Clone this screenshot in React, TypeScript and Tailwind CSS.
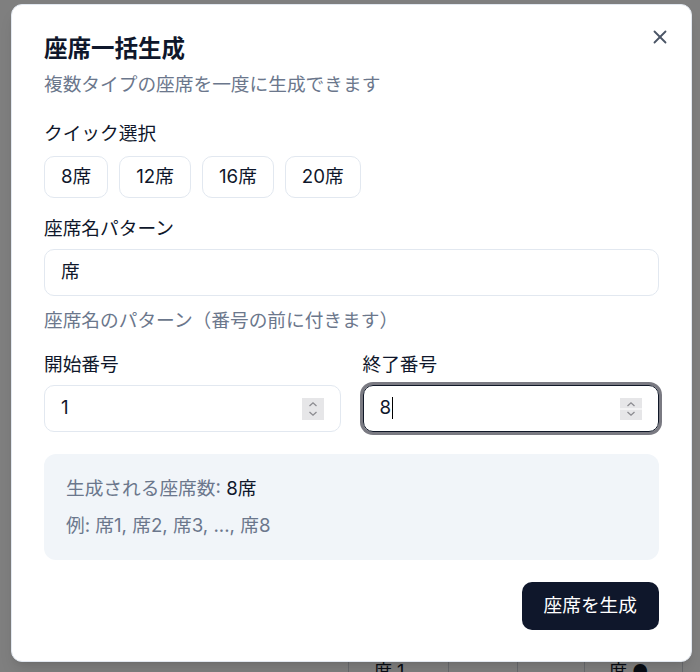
import { X } from "lucide-react";

const font = "font-['Inter','Noto_Sans_CJK_JP',sans-serif]";

function Spinner({ split = false }: { split?: boolean }) {
  return (
    <svg width="22" height="22" viewBox="0 0 22 22" className="shrink-0">
      <rect x="0" y="0" width="22" height="22" fill="#e6e6e8" />
      {split && <rect x="0" y="10.5" width="22" height="1" fill="#ffffff" />}
      <path d="M7.5 8 L11 4.8 L14.5 8" fill="none" stroke="#8b8b90" strokeWidth="1.3" />
      <path d="M7.5 14 L11 17.2 L14.5 14" fill="none" stroke="#8b8b90" strokeWidth="1.3" />
    </svg>
  );
}

const quick = ["8席", "12席", "16席", "20席"];

export default function App() {
  return (
    <div className={`relative flex h-[672px] w-full flex-col overflow-hidden bg-white ${font}`}>
      {/* page content peeking out under the dialog */}
      <div className="flex-1" />
      <div className="flex h-[40px] pl-[348px] text-[18px] text-gray-900">
        <div className="w-[101px] border-x border-gray-300 pl-[25px] pt-[26px]">席 1</div>
        <div className="w-[69px] border-r border-gray-300" />
        <div className="w-[67px] border-r border-gray-300" />
        <div className="w-[98px] border-r border-gray-300 pl-[24px] pt-[26px]">席 ●</div>
      </div>

      {/* overlay */}
      <div className="absolute inset-0 bg-black/50" />

      {/* dialog */}
      <div className="absolute left-[11px] top-[4px] w-[681px] rounded-[11px] border border-slate-200 bg-white px-[32px] pb-[31px] pt-[32px] shadow-lg">
        <button className="absolute right-[20px] top-[21px] text-gray-600">
          <X size={22} strokeWidth={2} />
        </button>

        <h2 className="text-[23.5px] font-semibold leading-[24px] text-slate-900">座席一括生成</h2>
        <p className="mt-[10px] text-[18.7px] leading-[27px] text-[#6b778c]">
          複数タイプの座席を一度に生成できます
        </p>

        <div className="mt-[22px] text-[18.7px] leading-[27px] text-slate-900">クイック選択</div>
        <div className="mt-[9px] flex gap-[11px]">
          {quick.map((q) => (
            <button
              key={q}
              className="h-[42px] rounded-[10px] border border-slate-200 bg-white px-4 text-[18.7px] text-slate-900"
            >
              {q}
            </button>
          ))}
        </div>

        <div className="mt-[17px] text-[18.7px] leading-[27px] text-slate-900">座席名パターン</div>
        <div className="mt-[7px] flex h-[47px] items-center rounded-[10px] border border-slate-200 px-[16px] text-[18.7px] text-slate-900">
          席
        </div>
        <p className="mt-[11px] text-[18.7px] leading-[27px] text-[#6b778c]">
          座席名のパターン（番号の前に付きます）
        </p>

        <div className="mt-[17px] grid grid-cols-2 gap-x-[22px]">
          <div className="text-[18.7px] leading-[27px] text-slate-900">開始番号</div>
          <div className="text-[18.7px] leading-[27px] text-slate-900">終了番号</div>
          <div className="mt-[7px] flex h-[47px] items-center justify-between rounded-[10px] border border-slate-200 pl-[16px] pr-[16px] text-[18.7px] text-slate-900">
            <span>1</span>
            <Spinner />
          </div>
          <div className="mt-[7px] flex h-[47px] items-center justify-between rounded-[10px] border border-gray-900 pl-[16px] pr-[16px] text-[18.7px] text-slate-900 ring-[3px] ring-[#7a7a82]">
            <span className="flex items-center">
              8<span className="ml-px inline-block h-[22px] w-px bg-black" />
            </span>
            <Spinner split />
          </div>
        </div>

        <div className="mt-[22px] rounded-[12px] bg-slate-100 px-[22px] pb-[21px] pt-[21px] text-[18.7px] leading-[27px] text-[#6b778c]">
          <p>
            生成される座席数: <span className="text-slate-900">8席</span>
          </p>
          <p className="mt-[10px]">例: 席1, 席2, 席3, ..., 席8</p>
        </div>

        <div className="mt-[22px] flex justify-end">
          <button className="h-[48px] rounded-[10px] bg-slate-900 px-[22px] text-[18.7px] text-white">
            座席を生成
          </button>
        </div>
      </div>
    </div>
  );
}
